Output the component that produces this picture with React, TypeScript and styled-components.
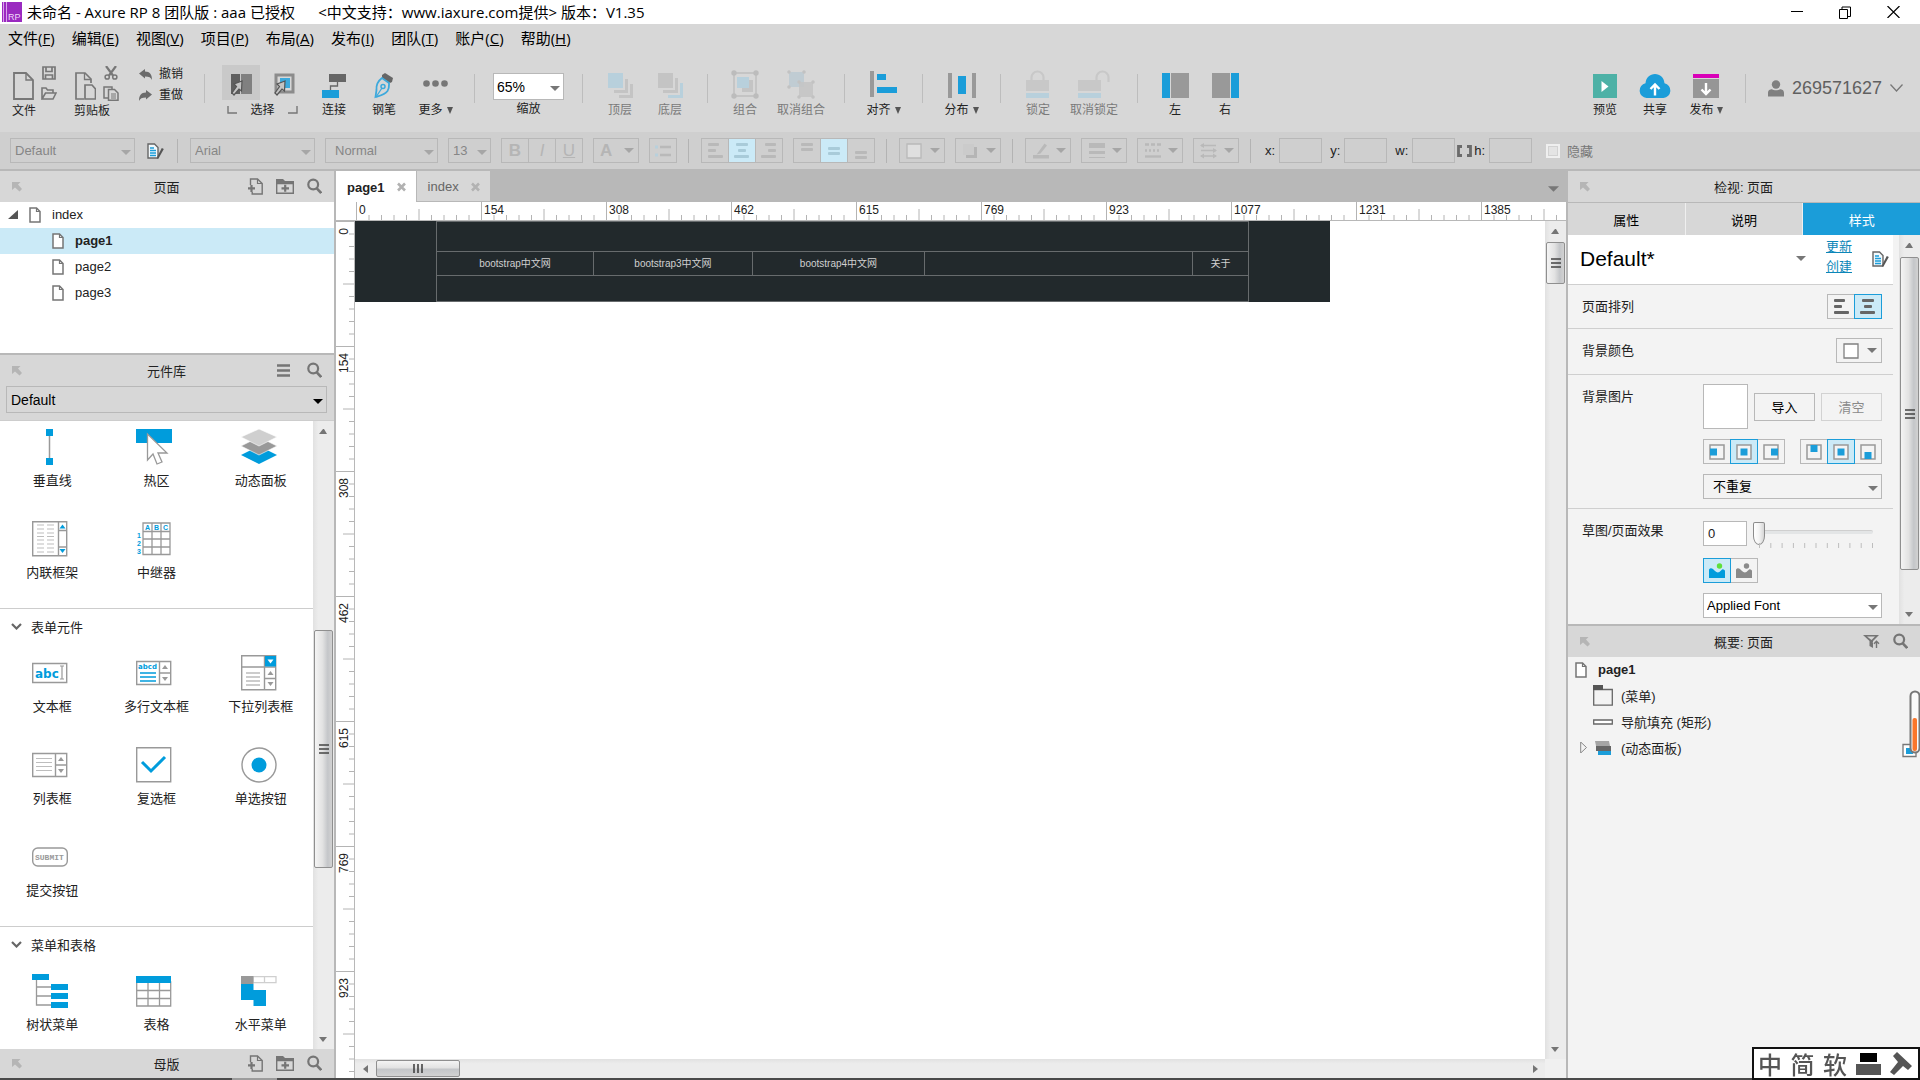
import React, { useId, useState } from 'react';
import styled, { createGlobalStyle, css } from 'styled-components';

/* ------------------------------------------------------------------ */
/* Theme                                                               */
/* ------------------------------------------------------------------ */

const UI_FONT = '"Liberation Sans", Arial, "Noto Sans CJK SC", sans-serif';
const SYSTEM_FONT = '"Open Sans", "Noto Sans CJK SC", sans-serif';

const c = {
  chrome: '#d7d7d7',
  format: '#cfcfcf',
  edge: '#b8b8b8',
  panel: '#f3f3f3',
  line: '#cfcfcf',
  blue: '#1b9dd9',
  iconBlue: '#009cdc',
  pale: '#cbeaf7',
  grey: '#999999',
  dark: '#757575',
  text: '#222222',
};

const GlobalStyle = createGlobalStyle`
  *, *::before, *::after { box-sizing: border-box; }
  html, body { margin: 0; padding: 0; }
  body { overflow: hidden; font-family: ${UI_FONT}; font-size: 13px; color: ${c.text}; }
  button, input, select { font: inherit; color: inherit; margin: 0; border-radius: 0; }
  button { background: none; border: 0; padding: 0; cursor: default; }
  ul { list-style: none; margin: 0; padding: 0; }
  h2, h3 { margin: 0; font-weight: normal; font-size: 13px; }
  svg { display: block; flex: none; }
`;

/* ------------------------------------------------------------------ */
/* Window frame                                                        */
/* ------------------------------------------------------------------ */

const Window = styled.div`
  display: flex;
  flex-direction: column;
  height: 100vh;
  background: ${c.chrome};
`;

const TitleBar = styled.header`
  display: flex;
  align-items: center;
  height: 24px;
  flex: none;
  padding: 0 14px 0 2px;
  background: #fff;
  color: #000;
  font-family: ${SYSTEM_FONT};
  font-size: 15px;
  line-height: 22px;
`;

const TitleText = styled.span`
  flex: 1;
  margin-left: 5px;
  white-space: pre;
`;

const WindowButtons = styled.div`
  display: flex;
  gap: 22px;
`;

const WindowButton = styled.button`
  display: grid;
  place-items: center;
  width: 26px;
  height: 22px;
`;

const MenuBar = styled.nav`
  display: flex;
  align-items: center;
  gap: 17px;
  height: 30px;
  flex: none;
  padding: 0 0 2px 8px;
  font-family: ${SYSTEM_FONT};
  font-size: 15px;
  color: #000;
`;

const MenuButton = styled.button`
  line-height: 22px;
  white-space: nowrap;
`;

const BottomEdge = styled.div`
  display: flex;
  height: 2px;
  flex: none;
  background: #4a4a4a;
`;

const BottomEdgeMark = styled.div`
  width: 45px;
  margin-left: 232px;
  background: #9c9c9c;
`;

/* ------------------------------------------------------------------ */
/* Main toolbar                                                        */
/* ------------------------------------------------------------------ */

const Toolbar = styled.div`
  display: flex;
  height: 78px;
  flex: none;
  padding: 11px 0 0 12px;
  font-size: 12px;
  white-space: nowrap;
`;

const ToolSep = styled.div`
  width: 1px;
  height: 29px;
  margin: 9px 12px 0;
  flex: none;
  background: #bdbdbd;
`;

const FileGroup = styled.div`
  width: 46px;
  margin-right: 16px;
`;

const FileIcons = styled.div`
  display: flex;
  gap: 7px;
  height: 37px;
`;

const FileMain = styled.button`
  padding-top: 4px;
`;

const FileSide = styled.div`
  display: flex;
  flex-direction: column;
  gap: 6px;
`;

const SideButton = styled.button`
  display: grid;
  place-items: center;
  width: 16px;
  height: 15px;
`;

const ToolLabel = styled.span`
  display: block;
  line-height: 18px;
  text-align: left;
`;

const UndoColumn = styled.div`
  display: flex;
  flex-direction: column;
  gap: 3px;
  width: 56px;
  padding-left: 3px;
`;

const UndoButton = styled.button`
  display: flex;
  align-items: center;
  gap: 7px;
  line-height: 18px;
`;

const Tool = styled.button<{ $w?: number; $off?: boolean }>`
  display: flex;
  flex-direction: column;
  align-items: center;
  width: ${(p) => p.$w ?? 50}px;
  height: 54px;
  flex: none;
  color: ${(p) => (p.$off ? '#7a7a7a' : c.text)};

  & > svg { margin-top: 5px; margin-bottom: 2px; }
  & > span { display: flex; align-items: center; gap: 4px; line-height: 18px; }
`;

const SelectGroup = styled.div`
  width: 92px;
  padding: 0 6px 0 5px;
`;

const SelectButtons = styled.div`
  display: flex;
  gap: 5px;
`;

const SelectButton = styled.button<{ $on?: boolean }>`
  display: grid;
  place-items: center;
  width: 38px;
  height: 35px;
  background: ${(p) => (p.$on ? '#c9c9c9' : 'transparent')};
`;

const SelectCaption = styled.div`
  display: flex;
  justify-content: space-between;
  align-items: center;
  padding: 0 5px;
  line-height: 18px;
  margin-top: 1px;
`;

const ZoomTool = styled.label`
  display: flex;
  flex-direction: column;
  align-items: center;
  width: 83px;
  padding-top: 8px;
  line-height: 18px;
`;

const PublishTools = styled.div`
  display: flex;
  margin-left: auto;
`;

const Account = styled.button`
  display: flex;
  align-items: center;
  gap: 8px;
  height: 46px;
  padding: 0 17px 0 10px;
  font-size: 18px;
  color: #606060;
`;

/* ------------------------------------------------------------------ */
/* Select box shared by every bar                                      */
/* ------------------------------------------------------------------ */

const SelectBox = styled.span<{ $w?: number }>`
  position: relative;
  display: block;
  flex: none;
  width: ${(p) => (p.$w ? `${p.$w}px` : '100%')};

  & > svg {
    position: absolute;
    right: 4px;
    top: 50%;
    margin-top: -1px;
    pointer-events: none;
  }
`;

const NativeSelect = styled.select<{ $bg?: string; $h?: number; $size?: number; $pad?: number; $edge?: string }>`
  display: block;
  appearance: none;
  width: 100%;
  height: ${(p) => p.$h ?? 25}px;
  padding: 0 16px 0 ${(p) => p.$pad ?? 4}px;
  border: 1px solid ${(p) => p.$edge ?? c.edge};
  background: ${(p) => p.$bg ?? 'transparent'};
  font-size: ${(p) => p.$size ?? 13}px;
  color: #000;
  opacity: 1;

  &:disabled { color: #868686; opacity: 1; }
`;

/* ------------------------------------------------------------------ */
/* Format bar                                                          */
/* ------------------------------------------------------------------ */

const FormatBar = styled.div`
  display: flex;
  align-items: center;
  gap: 10px;
  height: 37px;
  flex: none;
  padding: 0 10px;
  background: ${c.format};
`;

const FormatSep = styled.div`
  width: 1px;
  height: 24px;
  margin: 0 2px 0 1px;
  flex: none;
  background: #b3b3b3;
`;

const StyleButton = styled.button`
  width: 21px;
  padding-left: 2px;
`;

const Segments = styled.div`
  display: flex;
  flex: none;
`;

const segmentOn = css`
  background: ${c.pale};
`;

const Segment = styled.button<{ $on?: boolean; $strong?: boolean }>`
  display: grid;
  place-items: center;
  width: 28px;
  height: 25px;
  border: 1px solid ${c.edge};
  color: #b5b5b5;
  font-size: 17px;
  line-height: 22px;
  ${(p) => p.$on && segmentOn}
  ${(p) => p.$on && p.$strong && css`border-color: ${c.blue}; position: relative; z-index: 1;`}

  & + & { margin-left: -1px; }
`;

const DropButton = styled.button`
  display: flex;
  align-items: center;
  justify-content: space-between;
  width: 46px;
  height: 25px;
  flex: none;
  padding: 0 4px 0 6px;
  border: 1px solid ${c.edge};
  color: #b5b5b5;
  font-size: 17px;
`;

const CoordField = styled.label`
  display: flex;
  align-items: center;
  justify-content: flex-end;
  gap: 4px;
  flex: none;
`;

const Coords = styled.div`
  display: flex;
  align-items: center;
  gap: 8px;
  margin-left: 2px;
`;

const SizeCoords = styled(Coords)`
  gap: 2px;
  margin-left: 0;
`;

const CoordInput = styled.input`
  width: 43px;
  height: 25px;
  border: 1px solid ${c.edge};
  background: transparent;
`;

const HideField = styled.label`
  display: flex;
  align-items: center;
  gap: 7px;
  margin-left: 4px;
  color: #777;
`;

const HideBox = styled.input`
  appearance: none;
  width: 14px;
  height: 14px;
  border: 2px solid #efefef;
  background: #e4e4e4;
  box-shadow: inset 0 0 0 1px #d2d2d2;
`;

/* ------------------------------------------------------------------ */
/* Work area                                                           */
/* ------------------------------------------------------------------ */

const Work = styled.main`
  display: flex;
  flex: 1;
  min-height: 0;
  border-top: 2px solid ${c.edge};
`;

const LeftDock = styled.aside`
  display: flex;
  flex-direction: column;
  width: 336px;
  flex: none;
  border-right: 2px solid ${c.edge};
`;

const RightDock = styled.aside`
  position: relative;
  display: flex;
  flex-direction: column;
  width: 354px;
  flex: none;
  border-left: 2px solid ${c.edge};
  background: ${c.panel};
`;

const PanelHead = styled.header<{ $rule?: boolean; $h?: number }>`
  display: grid;
  grid-template-columns: 1fr auto 1fr;
  align-items: center;
  height: ${(p) => p.$h ?? 31}px;
  flex: none;
  padding: 0 12px 1px 11px;
  background: ${c.chrome};
  border-bottom: ${(p) => (p.$rule ? `1px solid ${c.edge}` : '0')};
`;

const HeadIcons = styled.div`
  display: flex;
  justify-content: flex-end;
  align-items: center;
  gap: 13px;
`;

const PageTree = styled.ul`
  height: 151px;
  flex: none;
  background: #fff;
`;

const TreeRow = styled.li<{ $indent: number; $on?: boolean; $gap?: number }>`
  display: flex;
  align-items: center;
  gap: ${(p) => p.$gap ?? 11}px;
  height: 26px;
  padding: 0 0 1px ${(p) => p.$indent}px;
  font-weight: ${(p) => (p.$on ? 'bold' : 'normal')};
  background: ${(p) => (p.$on ? c.pale : 'transparent')};
`;

const OutlineRow = styled(TreeRow)`
  background: transparent;
`;

const LibraryTop = styled.div`
  flex: none;
  border-top: 2px solid ${c.edge};
  background: ${c.chrome};
`;

const LibraryPick = styled.div`
  padding: 0 7px 7px 6px;
`;

const Library = styled.div`
  display: flex;
  flex: 1;
  min-height: 0;
  background: #fff;
  border-top: 1px solid #cdcdcd;
`;

const LibraryScroll = styled.div`
  flex: 1;
  min-width: 0;
  overflow: hidden;
  padding-top: 3px;
`;

const LibraryHeading = styled.h3`
  display: flex;
  align-items: center;
  gap: 9px;
  height: 42px;
  padding: 0 0 6px 11px;
  border-top: 1px solid #cdcdcd;
`;

const WidgetGrid = styled.ul`
  display: grid;
  grid-template-columns: repeat(3, 1fr);
  grid-auto-rows: 92px;
`;

const Widget = styled.li`
  display: flex;
  flex-direction: column;
  align-items: center;
  padding-top: 5px;
  line-height: 20px;
  white-space: nowrap;

  & > svg { margin: 0 4px 6px 0; }
`;

/* ------------------------------------------------------------------ */
/* Scroll bars                                                         */
/* ------------------------------------------------------------------ */

const ScrollTrack = styled.div<{ $h?: boolean }>`
  display: flex;
  flex-direction: ${(p) => (p.$h ? 'row' : 'column')};
  ${(p) => (p.$h ? 'height: 19px; flex: 1;' : 'width: 21px; flex: none;')}
  background: linear-gradient(${(p) => (p.$h ? '180deg' : '90deg')}, #e1e1e1, #ececec 25%, #ececec);
`;

const ScrollArrow = styled.button`
  display: grid;
  place-items: center;
  width: 20px;
  height: 20px;
  flex: none;
`;

const ScrollArrowH = styled(ScrollArrow)`
  height: 19px;
`;

const ScrollSpace = styled.div<{ $n: number }>`
  flex: ${(p) => p.$n} 1 0;
`;

const ScrollThumb = styled.div<{ $h?: boolean; $n: number }>`
  display: grid;
  place-items: center;
  flex: ${(p) => p.$n} 1 0;
  margin: 1px;
  border: 1px solid #8f8f8f;
  border-radius: 2px;
  background: ${(p) =>
    p.$h
      ? 'linear-gradient(180deg, #f4f4f4, #e2e2e2 45%, #c4c6c9 55%, #d2d2d2)'
      : 'linear-gradient(90deg, #f4f4f4, #e2e2e2 45%, #c4c6c9 75%, #d2d2d2)'};
`;

/* ------------------------------------------------------------------ */
/* Centre                                                              */
/* ------------------------------------------------------------------ */

const Centre = styled.section`
  display: flex;
  flex-direction: column;
  flex: 1;
  min-width: 0;
  background: #fff;
`;

const TabStrip = styled.div`
  display: flex;
  height: 31px;
  flex: none;
  background: ${c.edge};
`;

const Tab = styled.div<{ $on?: boolean }>`
  display: flex;
  align-items: center;
  gap: 12px;
  padding: 1px 10px 0 11px;
  border-right: 1px solid ${c.edge};
  margin-bottom: ${(p) => (p.$on ? 0 : 1)}px;
  background: ${(p) => (p.$on ? '#fff' : c.chrome)};
  color: ${(p) => (p.$on ? c.text : '#666')};
  font-weight: ${(p) => (p.$on ? 'bold' : 'normal')};
`;

const TabMenu = styled.button`
  margin-left: auto;
  padding: 5px 7px 0 0;
`;

const RulerTop = styled.div`
  display: flex;
  height: 19px;
  flex: none;
  overflow: hidden;
  padding-left: 20px;
  border-bottom: 1px solid ${c.edge};
  font-size: 12px;
`;

const TopMark = styled.div`
  display: grid;
  width: 125px;
  flex: none;
  line-height: 16px;

  & > * { grid-area: 1 / 1; }
  & > span { padding-left: 3px; }
`;

const CentreBody = styled.div`
  display: flex;
  flex: 1;
  min-height: 0;
`;

const RulerSide = styled.div`
  display: flex;
  flex-direction: column;
  width: 19px;
  flex: none;
  overflow: hidden;
  border-right: 1px solid ${c.edge};
  font-size: 12px;
`;

const SideMark = styled.div`
  display: grid;
  height: 125px;
  flex: none;
  line-height: 16px;

  & > * { grid-area: 1 / 1; }
  & > span {
    justify-self: start;
    align-self: start;
    margin-top: 7px;
    writing-mode: vertical-rl;
    transform: rotate(180deg);
  }
`;

const CanvasColumn = styled.div`
  display: flex;
  flex-direction: column;
  flex: 1;
  min-width: 0;
`;

const CanvasRow = styled.div`
  display: flex;
  flex: 1;
  min-height: 0;
`;

const Canvas = styled.div`
  flex: 1;
  min-width: 0;
  overflow: hidden;
  background: #fff;
`;

const Banner = styled.div`
  width: 975px;
  height: 81px;
  padding: 0 81px;
  background: #22292c;
`;

const BannerFrame = styled.div`
  display: grid;
  grid-template-rows: 29px 25px 1fr;
  height: 100%;
  border: 1px solid #676b6d;
`;

const BannerMenu = styled.ul`
  grid-row: 2;
  display: grid;
  grid-template-columns: 156px 159px 172px 1fr 56px;
  border-top: 1px solid #676b6d;
  border-bottom: 1px solid #676b6d;
  font-size: 10px;
  line-height: 23px;
  text-align: center;
  color: #d0d0d0;
`;

const BannerItem = styled.li`
  & + & { border-left: 1px solid #676b6d; }
`;

const ScrollRow = styled.div`
  display: flex;
  flex: none;
`;

const ScrollCorner = styled.div`
  width: 21px;
  background: #f0f0f0;
`;

/* ------------------------------------------------------------------ */
/* Inspector                                                           */
/* ------------------------------------------------------------------ */

const InspectorTabs = styled.div`
  display: grid;
  grid-template-columns: repeat(3, 1fr);
  gap: 1px;
  height: 32px;
  flex: none;
  background: #efefef;
`;

const InspectorTab = styled.button<{ $on?: boolean }>`
  background: ${(p) => (p.$on ? c.blue : c.chrome)};
  color: ${(p) => (p.$on ? '#fff' : '#000')};
`;

const Inspector = styled.div`
  display: flex;
  height: 391px;
  flex: none;
  border-bottom: 2px solid ${c.edge};
`;

const InspectorBody = styled.div`
  flex: 1;
  min-width: 0;
  margin-right: 6px;
`;

const StyleRow = styled.div`
  display: flex;
  align-items: center;
  height: 50px;
  padding: 0 4px 2px 12px;
  border-bottom: 1px solid ${c.line};
  background: #fff;
`;

const StyleName = styled.button`
  display: flex;
  flex: 1;
  align-items: center;
  justify-content: space-between;
  font-size: 21px;
  color: #000;
`;

const StyleLinks = styled.div`
  display: flex;
  flex: none;
  flex-direction: column;
  margin: 0 20px 4px;
  line-height: 20px;
  white-space: nowrap;

  & > a { color: #0c86b8; }
`;

const PropRow = styled.div<{ $h: number }>`
  display: grid;
  grid-template-columns: 121px 1fr;
  min-height: ${(p) => p.$h}px;
  padding: 9px 11px 0 14px;
  border-bottom: 1px solid ${c.line};

  &:last-child { border-bottom: 0; }
`;

const PropLabel = styled.span`
  line-height: 26px;
`;

const PropControls = styled.div<{ $end?: boolean }>`
  display: flex;
  flex-direction: column;
  align-items: ${(p) => (p.$end ? 'flex-end' : 'stretch')};
  gap: 10px;
`;

const ControlLine = styled.div<{ $between?: boolean }>`
  display: flex;
  align-items: center;
  justify-content: ${(p) => (p.$between ? 'space-between' : 'flex-start')};
  gap: 6px;
`;

const Preview = styled.div`
  width: 45px;
  height: 45px;
  border: 1px solid ${c.edge};
  background: #fff;
`;

const PushButton = styled.button`
  width: 61px;
  height: 28px;
  border: 1px solid ${c.edge};
  color: #000;

  &:disabled { border-color: #d2d2d2; color: #8a8a8a; }
`;

const EffectInput = styled.input`
  width: 44px;
  height: 25px;
  padding: 0 4px;
  border: 1px solid ${c.edge};
  background: #fff;
`;

const SliderBox = styled.div`
  width: 126px;
  height: 30px;
  padding-top: 2px;
`;

const Slider = styled.input`
  display: block;
  appearance: none;
  width: 120px;
  height: 23px;
  background: transparent;

  &::-webkit-slider-runnable-track {
    height: 4px;
    border-radius: 2px;
    background: #e3e5e6;
    border-top: 1px solid #cfcfcf;
  }
  &::-webkit-slider-thumb {
    appearance: none;
    width: 12px;
    height: 23px;
    margin-top: -9px;
    border: 1px solid #8c8c8c;
    border-radius: 2px 2px 6px 6px / 2px 2px 9px 9px;
    background: linear-gradient(90deg, #fff, #f4f4f4 50%, #d6d6d6);
  }
`;

const OutlineList = styled.ul`
  flex: 1;
`;

const PanelMark = styled.div`
  position: absolute;
  right: 0;
  top: 519px;
`;

const ImeBar = styled.div`
  position: fixed;
  right: 0;
  bottom: 0;
  display: flex;
  align-items: center;
  justify-content: space-between;
  width: 168px;
  height: 33px;
  padding: 0 5px 0 4px;
  border: 2px solid #111;
  background: #fff;
  color: #555;
  font-family: "Noto Sans CJK SC", sans-serif;
  font-size: 24px;
  font-weight: 500;
  line-height: 28px;
`;

/* ------------------------------------------------------------------ */
/* Icons                                                               */
/* ------------------------------------------------------------------ */

type IconProps = { w: number; h: number; children: React.ReactNode; vb?: string };

const Icon = ({ w, h, children, vb }: IconProps) => (
  <svg width={w} height={h} viewBox={vb ?? `0 0 ${w} ${h}`} fill="none" aria-hidden="true">
    {children}
  </svg>
);

const Caret = ({ color = '#777', w = 10, h = 5 }: { color?: string; w?: number; h?: number }) => (
  <Icon w={w} h={h} vb="0 0 10 5">
    <path d="M0 0h10L5 5z" fill={color} />
  </Icon>
);

const SmallCaret = () => (
  <Icon w={6} h={7}><path d="M0 0h6L3 7z" fill="#555" /></Icon>
);

const DockArrow = () => (
  <Icon w={11} h={11}>
    <path d="M1 1h8.500L7 3.500 11 8 8.500 10.500 4 6.500 1 9z" fill="#b5b5b5" />
    <path d="M4 3.500l5 5.500" stroke="#b5b5b5" />
  </Icon>
);

const PageIcon = () => (
  <Icon w={12} h={16}>
    <path d="M1 1h6.500L11 4.500V15H1z" stroke={c.dark} strokeWidth="1.500" fill="#fff" />
    <path d="M7.500 1v3.500H11" stroke={c.dark} strokeWidth="1.200" />
  </Icon>
);

const SearchIcon = () => (
  <Icon w={15} h={16}>
    <circle cx="6.200" cy="6.500" r="4.900" stroke={c.dark} strokeWidth="2.200" />
    <path d="M9.800 10.300l4.400 4.700" stroke={c.dark} strokeWidth="2.600" />
  </Icon>
);

const AddPageIcon = () => (
  <Icon w={15} h={17}>
    <path d="M2.500 7V1h7l4.700 4.500V16h-10v-2" stroke={c.dark} strokeWidth="1.400" />
    <path d="M9.500 1v4.500h4.500" stroke={c.dark} strokeWidth="1.200" />
    <path d="M0 10.300h7M3.500 7v7" stroke={c.dark} strokeWidth="2.200" />
  </Icon>
);

const AddFolderIcon = () => (
  <Icon w={18} h={15}>
    <path d="M.7 4.500h16.600v9.800H.7z" stroke={c.dark} strokeWidth="1.400" />
    <path d="M0 0h7l2 2h9v2.500H0z" fill={c.dark} />
    <path d="M5.500 9.300h7.500M9.200 5.800v7" stroke={c.dark} strokeWidth="2.200" />
  </Icon>
);

const BurgerIcon = () => (
  <Icon w={17} h={13}>
    <path d="M0 1.500h13M0 6.500h13M0 11.500h13" stroke={c.dark} strokeWidth="2.400" />
  </Icon>
);

const FilterIcon = () => (
  <Icon w={17} h={13}>
    <path d="M0 0h16L10 6v7L6.500 11V6z" fill={c.dark} />
    <path d="M4 1.500h8L8.500 5z" fill="#d7d7d7" />
    <path d="M13.500 13V6M10.800 8.800l2.700-2.800 2.700 2.800" stroke="#d7d7d7" strokeWidth="3.500" />
    <path d="M13.500 13V6M11 8.700l2.500-2.500L16 8.700" stroke={c.dark} strokeWidth="1.400" />
  </Icon>
);

const CloseIcon = () => (
  <Icon w={9} h={10}>
    <path d="M1 1.500l7 7M8 1.500l-7 7" stroke="#b2b2b2" strokeWidth="2.600" />
  </Icon>
);

const StyleIcon = () => (
  <Icon w={17} h={16}>
    <path d="M1 1h6.500L11 4.500V15H1z" stroke="#666" strokeWidth="1.400" fill="#f2f9fc" />
    <path d="M3 5h4M3 7.500h6M3 10h6M3 12.500h6" stroke={c.blue} strokeWidth="1.600" />
    <path d="M14.800 5l-4.300 8.300-.6 2.700 2.300-1.800 4.600-8.200z" fill="#555" />
  </Icon>
);

type LinesProps = { rows: [number, number, number][]; color: string };

/* Each row is [x, y, width]. */
const Lines = ({ rows, color }: LinesProps) => (
  <Icon w={16} h={16}>
    {rows.map(([x, y, w]) => (
      <rect key={`${x}-${y}`} x={x} y={y} width={w} height={3} rx={1} fill={color} />
    ))}
  </Icon>
);

const alignLeft: [number, number, number][] = [[1, 0, 11], [1, 6, 8], [1, 12, 15]];
const alignMid: [number, number, number][] = [[2, 0, 12], [4, 6, 8], [0, 12, 15]];
const alignRight: [number, number, number][] = [[4, 0, 11], [7, 6, 8], [0, 12, 15]];

const InsetIcon = ({ x, y }: { x: number; y: number }) => (
  <Icon w={16} h={16}>
    <rect x="1" y="1" width="14" height="14" stroke={c.grey} strokeWidth="1.500" fill="#f4f4f4" />
    <rect x={x} y={y} width="7" height="7" fill={c.blue} />
  </Icon>
);

const PictureIcon = ({ land, sun }: { land: string; sun: string }) => (
  <Icon w={16} h={15}>
    <path d="M0 6.500C2 4 4 6 6 8s4 2 6-.5 3-1 4 0V15H0z" fill={land} />
    <circle cx="10.500" cy="3" r="2.700" fill={sun} />
  </Icon>
);

/* ------------------------------------------------------------------ */
/* Scroll bar component                                                */
/* ------------------------------------------------------------------ */

type ScrollProps = { before: number; size: number; after: number };

const ScrollV = ({ before, size, after }: ScrollProps) => (
  <ScrollTrack>
    <ScrollArrow aria-label="向上">
      <Icon w={8} h={5}><path d="M0 5h8L5 0H4z" fill={c.dark} /></Icon>
    </ScrollArrow>
    <ScrollSpace $n={before} />
    <ScrollThumb $n={size}>
      <Icon w={10} h={10}><path d="M0 1h10M0 5h10M0 9h10" stroke="#444" strokeWidth="1.600" /></Icon>
    </ScrollThumb>
    <ScrollSpace $n={after} />
    <ScrollArrow aria-label="向下">
      <Icon w={8} h={5}><path d="M0 0h8L4 5z" fill={c.dark} /></Icon>
    </ScrollArrow>
  </ScrollTrack>
);

const ScrollH = ({ before, size, after }: ScrollProps) => (
  <ScrollTrack $h>
    <ScrollArrowH aria-label="向左">
      <Icon w={5} h={8}><path d="M5 0v8L0 4z" fill={c.dark} /></Icon>
    </ScrollArrowH>
    <ScrollSpace $n={before} />
    <ScrollThumb $h $n={size}>
      <Icon w={10} h={9}><path d="M1 0v9M5 0v9M9 0v9" stroke="#444" strokeWidth="1.600" /></Icon>
    </ScrollThumb>
    <ScrollSpace $n={after} />
    <ScrollArrowH aria-label="向右">
      <Icon w={5} h={8}><path d="M0 0v8l5-4z" fill={c.dark} /></Icon>
    </ScrollArrowH>
  </ScrollTrack>
);

/* ------------------------------------------------------------------ */
/* Title and menu                                                      */
/* ------------------------------------------------------------------ */

const menus: [string, string][] = [
  ['文件', 'F'], ['编辑', 'E'], ['视图', 'V'], ['项目', 'P'], ['布局', 'A'],
  ['发布', 'I'], ['团队', 'T'], ['账户', 'C'], ['帮助', 'H'],
];

const Title = () => (
  <TitleBar>
    <Icon w={20} h={20}>
      <rect width="20" height="20" fill="#9a2ac0" />
      <path d="M1.500 0v20M4.500 0v20" stroke="#d9a5ea" strokeWidth="1" />
      <text x="6" y="18" fontFamily="Liberation Sans" fontSize="9" fill="#f0d8f8">RP</text>
    </Icon>
    <TitleText>{'未命名 - Axure RP 8 团队版 : aaa 已授权      <中文支持：www.iaxure.com提供> 版本：V1.35'}</TitleText>
    <WindowButtons>
      <WindowButton aria-label="最小化"><Icon w={12} h={12}><path d="M0 5.500h12" stroke="#000" /></Icon></WindowButton>
      <WindowButton aria-label="还原">
        <Icon w={12} h={13}><path d="M.5 3.500h8v9h-8zM3 3V1h8.500v9.500H9" stroke="#000" /></Icon>
      </WindowButton>
      <WindowButton aria-label="关闭"><Icon w={13} h={12}><path d="M.5 0l12 12M12.500 0l-12 12" stroke="#000" strokeWidth="1.200" /></Icon></WindowButton>
    </WindowButtons>
  </TitleBar>
);

/* ------------------------------------------------------------------ */
/* Toolbar pieces                                                      */
/* ------------------------------------------------------------------ */

const F = '#b8d0dc';
const G = '#c4c4c4';

const LargeCursor = () => (
  <path d="M11 12l-8 3 2.500 2.500L1 24l2 2 5-6 2.500 2z" fill="#c4c4c4" stroke="#555" strokeWidth="1.200" />
);

const ToolbarView = () => {
  const [zoom, setZoom] = useState('65%');
  return (
    <Toolbar>
      <FileGroup>
        <FileIcons>
          <FileMain aria-label="新建">
            <Icon w={22} h={30}>
              <path d="M2 2h12l7 7v19H2z" stroke="#777" strokeWidth="1.800" />
              <path d="M14 2v7h7" stroke="#777" strokeWidth="1.400" />
            </Icon>
          </FileMain>
          <FileSide>
            <SideButton aria-label="保存">
              <Icon w={14} h={14}>
                <path d="M1 1h12v12H1zM4 1v4.500h6V1M3.500 13V9h7v4" stroke="#777" strokeWidth="1.700" />
              </Icon>
            </SideButton>
            <SideButton aria-label="打开">
              <Icon w={16} h={13}>
                <path d="M1 12V1h4l1.500 2H12v3M1 12l3.500-6H15l-3 6z" stroke="#777" strokeWidth="1.600" />
              </Icon>
            </SideButton>
          </FileSide>
        </FileIcons>
        <ToolLabel>文件</ToolLabel>
      </FileGroup>
      <FileGroup>
        <FileIcons>
          <FileMain aria-label="粘贴">
            <Icon w={22} h={30}>
              <path d="M10 28H2V2h9l6 6v4" stroke="#777" strokeWidth="1.700" />
              <path d="M10.500 2v6.500H17" stroke="#777" strokeWidth="1.300" />
              <path d="M11 14h7l3.500 4v10H11z" stroke="#777" strokeWidth="1.700" />
            </Icon>
          </FileMain>
          <FileSide>
            <SideButton aria-label="剪切">
              <Icon w={14} h={14}>
                <path d="M2 0l7 9.500M12 0L5 9.500" stroke="#777" strokeWidth="2.200" />
                <circle cx="3.200" cy="11" r="2.100" stroke="#777" strokeWidth="1.500" />
                <circle cx="10.800" cy="11" r="2.100" stroke="#777" strokeWidth="1.500" />
              </Icon>
            </SideButton>
            <SideButton aria-label="复制">
              <Icon w={16} h={15}>
                <path d="M5 12H1V1h8v2" stroke="#777" strokeWidth="1.500" />
                <path d="M5.500 3.500h6L15 7v7.300H5.500z" stroke="#777" strokeWidth="1.500" />
                <path d="M8 8h5M8 10h5M8 12h5" stroke="#777" />
              </Icon>
            </SideButton>
          </FileSide>
        </FileIcons>
        <ToolLabel>剪贴板</ToolLabel>
      </FileGroup>
      <UndoColumn>
        <UndoButton>
          <Icon w={13} h={11}><path d="M0 4.500L6 0v2.500c5 0 7 3 7 8.500-1-2.500-3-3.500-7-3.500V9.500z" fill="#6b6b6b" /></Icon>
          撤销
        </UndoButton>
        <UndoButton>
          <Icon w={13} h={11}><path d="M13 4.500L7 0v2.500c-5 0-7 3-7 8.500 1-2.500 3-3.500 7-3.500V9.500z" fill="#6b6b6b" /></Icon>
          重做
        </UndoButton>
      </UndoColumn>
      <ToolSep />
      <SelectGroup>
        <SelectButtons>
          <SelectButton $on aria-label="相交选择">
            <Icon w={21} h={27}>
              <path d="M0 5h9v20H0z" fill="#5f5f5f" />
              <path d="M10 5h11v20H10z" fill="#808080" />
              <LargeCursor />
            </Icon>
          </SelectButton>
          <SelectButton aria-label="包含选择">
            <Icon w={21} h={27}>
              <path d="M2 6h17v17H2z" stroke="#8c8c8c" strokeWidth="3" fill="#d7d7d7" />
              <path d="M6 9h10v10H6z" fill="#3da9dc" />
              <LargeCursor />
            </Icon>
          </SelectButton>
        </SelectButtons>
        <SelectCaption>
          <Icon w={10} h={8}><path d="M1 0v7h9" stroke="#777" strokeWidth="1.400" /></Icon>
          选择
          <Icon w={10} h={8}><path d="M9 0v7H0" stroke="#777" strokeWidth="1.400" /></Icon>
        </SelectCaption>
      </SelectGroup>
      <Tool>
        <Icon w={24} h={29}>
          <path d="M7 4h17v8H7z" fill="#666" />
          <path d="M15.500 12v4h-7v4" stroke="#666" strokeWidth="1.300" />
          <path d="M0 20h17v8H0z" fill={c.blue} />
        </Icon>
        <span>连接</span>
      </Tool>
      <Tool>
        <Icon w={20} h={29}>
          <path d="M8 5l3-2 8 5-1 4-2 1-8-5z" fill="#666" />
          <path d="M8 8c-4 3-6 7-5.500 12l-1 7c5-1.500 9-2 12-6 2-3 1.500-5 1.500-8z" stroke="#3da9dc" strokeWidth="1.800" />
          <circle cx="9" cy="16.500" r="2" stroke="#3da9dc" strokeWidth="1.500" />
          <path d="M2 27l6-9" stroke="#3da9dc" strokeWidth="1.300" />
        </Icon>
        <span>钢笔</span>
      </Tool>
      <Tool $w={53}>
        <Icon w={26} h={29}>
          <circle cx="3.500" cy="13.500" r="3.300" fill="#777" />
          <circle cx="12.500" cy="13.500" r="3.300" fill="#777" />
          <circle cx="21.500" cy="13.500" r="3.300" fill="#777" />
        </Icon>
        <span>更多<SmallCaret /></span>
      </Tool>
      <ToolSep />
      <ZoomTool>
        <SelectBox $w={71}>
          <NativeSelect $bg="#fff" $h={27} $size={14} $pad={3} value={zoom} onChange={(e) => setZoom(e.target.value)}>
            <option>65%</option>
            <option>100%</option>
          </NativeSelect>
          <Caret />
        </SelectBox>
        缩放
      </ZoomTool>
      <ToolSep />
      <Tool $off>
        <Icon w={25} h={29}>
          <path d="M0 3h15v15H0z" fill={F} />
          <path d="M17 9h3v14H6v-3h11z" fill={G} />
          <path d="M22 14h3v14H11v-3h11z" fill={G} />
        </Icon>
        <span>顶层</span>
      </Tool>
      <Tool $off>
        <Icon w={25} h={29}>
          <path d="M0 3h15v15H0z" fill={G} />
          <path d="M17 8h3v15H5v-3h12z" fill={G} />
          <path d="M22 13h3v15H10v-3h12z" fill={F} />
        </Icon>
        <span>底层</span>
      </Tool>
      <ToolSep />
      <Tool $off>
        <Icon w={28} h={29}>
          <path d="M3 3h22v23H3z" stroke={G} strokeWidth="1.800" />
          <path d="M11 10h11v12H11z" fill={G} />
          <path d="M6 7h12v11H6z" fill={F} />
          {[[3, 3], [25, 3], [3, 26], [25, 26]].map(([x, y]) => <circle key={`${x}${y}`} cx={x} cy={y} r="2.700" fill="#bcbcbc" />)}
        </Icon>
        <span>组合</span>
      </Tool>
      <Tool $off $w={62}>
        <Icon w={28} h={29}>
          <path d="M2 2h15v15H2z" fill="#c0ccd3" />
          <path d="M12 12h14v15H12z" fill={G} opacity=".85" />
          {[[2, 2], [17, 2], [2, 17], [26, 12], [12, 27], [26, 27], [12, 12]].map(([x, y]) => <circle key={`${x}-${y}`} cx={x} cy={y} r="1.800" fill="#c2c2c2" />)}
        </Icon>
        <span>取消组合</span>
      </Tool>
      <ToolSep />
      <Tool $w={53}>
        <Icon w={28} h={29}>
          <path d="M0 1h4v26H0z" fill={c.grey} />
          <path d="M7 4h9v6H7zM7 17h20v6H7z" fill={c.blue} />
        </Icon>
        <span>对齐<SmallCaret /></span>
      </Tool>
      <ToolSep />
      <Tool $w={53}>
        <Icon w={28} h={29}>
          <path d="M0 3h4v25H0zM24 3h4v25h-4z" fill={c.grey} />
          <path d="M10 6h8v18h-8z" fill={c.blue} />
        </Icon>
        <span>分布<SmallCaret /></span>
      </Tool>
      <ToolSep />
      <Tool $off>
        <Icon w={24} h={29}>
          <path d="M0 10h23v11H0z" fill="#c8c8c8" />
          <path d="M5.500 10V7.500a6 6 0 0 1 12 0V10" stroke="#c8c8c8" strokeWidth="2.200" />
          <path d="M0 23h23v5H0z" fill={F} />
        </Icon>
        <span>锁定</span>
      </Tool>
      <Tool $off $w={62}>
        <Icon w={32} h={29}>
          <path d="M0 10h23v11H0z" fill="#c8c8c8" />
          <path d="M18.500 10V7.500a6 6 0 0 1 12 0V12" stroke="#c8c8c8" strokeWidth="2.200" />
          <path d="M0 23h23v5H0z" fill={F} />
        </Icon>
        <span>取消锁定</span>
      </Tool>
      <ToolSep />
      <Tool>
        <Icon w={27} h={29}>
          <path d="M0 3h8v25H0z" fill={c.blue} />
          <path d="M9 3h18v25H9z" fill={c.grey} />
        </Icon>
        <span>左</span>
      </Tool>
      <Tool>
        <Icon w={27} h={29}>
          <path d="M0 3h18v25H0z" fill={c.grey} />
          <path d="M19 3h8v25h-8z" fill={c.blue} />
        </Icon>
        <span>右</span>
      </Tool>
      <PublishTools>
        <Tool>
          <Icon w={24} h={29}>
            <path d="M0 4h24v24H0z" fill="#4db1a6" />
            <path d="M8.500 11v11l7-5.500z" fill="#fff" />
          </Icon>
          <span>预览</span>
        </Tool>
        <Tool>
          <Icon w={32} h={29}>
            <path d="M7.500 28a7.500 7.500 0 0 1-1-14.800C7 7.500 11 4 16 4s9 3.500 9.500 9.200A7.500 7.500 0 0 1 24.500 28z" fill={c.blue} />
            <path d="M16 25.500V15M11.500 19l4.500-4.500 4.500 4.500" stroke="#fff" strokeWidth="2.400" />
          </Icon>
          <span>共享</span>
        </Tool>
        <Tool $w={53}>
          <Icon w={26} h={29}>
            <path d="M0 4h26v4H0z" fill="#d900b8" />
            <path d="M0 9h26v19H0z" fill="#969696" />
            <path d="M13 13v11M8.500 19.500L13 24l4.500-4.500" stroke="#fff" strokeWidth="2.400" />
          </Icon>
          <span>发布<SmallCaret /></span>
        </Tool>
        <ToolSep />
        <Account>
          <Icon w={16} h={17}>
            <circle cx="8" cy="4.500" r="4.200" fill="#808080" />
            <path d="M0 16.500v-3.500c0-3 2-3.800 4-3.800 2 1.300 6 1.300 8 0 2 0 4 .8 4 3.800v3.500z" fill="#808080" />
          </Icon>
          269571627
          <Icon w={13} h={8}><path d="M.5.5l6 6.500 6-6.500" stroke="#777" strokeWidth="1.300" /></Icon>
        </Account>
      </PublishTools>
    </Toolbar>
  );
};

/* ------------------------------------------------------------------ */
/* Format bar                                                          */
/* ------------------------------------------------------------------ */

const FormatSelect = ({ value, w, pad, label }: { value: string; w: number; pad?: number; label: string }) => (
  <SelectBox $w={w}>
    <NativeSelect disabled aria-label={label} $pad={pad}><option>{value}</option></NativeSelect>
    <Caret color="#a6a6a6" />
  </SelectBox>
);

const FormatBarView = () => {
  const dim = '#b9b9b9';
  return (
    <FormatBar>
      <FormatSelect value="Default" w={125} label="样式" />
      <StyleButton aria-label="样式管理"><StyleIcon /></StyleButton>
      <FormatSep />
      <FormatSelect value="Arial" w={125} label="字体" />
      <FormatSelect value="Normal" w={113} pad={9} label="字形" />
      <FormatSelect value="13" w={43} label="字号" />
      <Segments>
        <Segment><b>B</b></Segment>
        <Segment><i>I</i></Segment>
        <Segment><u>U</u></Segment>
      </Segments>
      <DropButton><b>A</b><Caret color="#a6a6a6" /></DropButton>
      <Segment aria-label="项目符号">
        <Icon w={16} h={14}>
          <path d="M0 3h3M0 11h3" stroke={F} strokeWidth="3" />
          <path d="M5 3h11M5 11h11" stroke={dim} strokeWidth="2.400" />
        </Icon>
      </Segment>
      <FormatSep />
      <Segments>
        <Segment aria-label="左对齐"><Lines rows={alignLeft} color={dim} /></Segment>
        <Segment $on aria-label="居中"><Lines rows={alignMid} color="#a9cbd9" /></Segment>
        <Segment aria-label="右对齐"><Lines rows={alignRight} color={dim} /></Segment>
      </Segments>
      <Segments>
        <Segment aria-label="顶部对齐"><Lines rows={[[2, 0, 12], [2, 5, 12]]} color={dim} /></Segment>
        <Segment $on aria-label="垂直居中"><Lines rows={[[2, 4, 12], [2, 9, 12]]} color="#a9cbd9" /></Segment>
        <Segment aria-label="底部对齐"><Lines rows={[[2, 8, 12], [2, 13, 12]]} color={dim} /></Segment>
      </Segments>
      <FormatSep />
      <DropButton aria-label="填充">
        <Icon w={16} h={16}><path d="M1 1h14v14H1z" stroke={dim} strokeWidth="1.300" fill="#dfdfdf" /></Icon>
        <Caret color="#a6a6a6" />
      </DropButton>
      <DropButton aria-label="阴影">
        <Icon w={16} h={16}>
          <path d="M4 4h11v11H4z" fill="#b5b5b5" />
          <path d="M1 1h11v11H1z" fill="#cbcbcb" />
        </Icon>
        <Caret color="#a6a6a6" />
      </DropButton>
      <FormatSep />
      <DropButton aria-label="线段颜色">
        <Icon w={18} h={16}>
          <path d="M6 9.500l6.500-9 2.500 2-6.500 8-4 1z" fill={dim} />
          <path d="M1 12h16v3.500H1z" fill={dim} />
        </Icon>
        <Caret color="#a6a6a6" />
      </DropButton>
      <DropButton aria-label="线宽">
        <Icon w={17} h={16}><path d="M1 0h16v5H1zM1 8h16v3H1zM1 14h16v1H1z" fill={dim} /></Icon>
        <Caret color="#a6a6a6" />
      </DropButton>
      <DropButton aria-label="线段类型">
        <Icon w={17} h={16}>
          <path d="M1 1.500h16" stroke={dim} strokeWidth="2.400" strokeDasharray="4 2" />
          <path d="M1 7.500h16" stroke={dim} strokeWidth="2.400" strokeDasharray="2 2" />
          <path d="M1 13.500h16" stroke={dim} strokeWidth="2.400" />
        </Icon>
        <Caret color="#a6a6a6" />
      </DropButton>
      <DropButton aria-label="箭头样式">
        <Icon w={17} h={16}>
          <path d="M1 2.500h15M1 7.500h15M1 13h15" stroke={dim} strokeWidth="1.400" />
          <path d="M4 0v5L0 2.500zM13 5v5l4-2.500zM4 10.500v5L0 13zM13 10.500v5l4-2.500z" fill={dim} />
        </Icon>
        <Caret color="#a6a6a6" />
      </DropButton>
      <FormatSep />
      <Coords>
        <CoordField>x: <CoordInput disabled /></CoordField>
        <CoordField>y: <CoordInput disabled /></CoordField>
        <SizeCoords>
          <CoordField>w: <CoordInput disabled /></CoordField>
          <Icon w={15} h={12}>
            <path d="M5 1.500H1.500v9H5M10 1.500h3.500v9H10" stroke="#6b6b6b" strokeWidth="2.800" />
          </Icon>
          <CoordField>h: <CoordInput disabled /></CoordField>
        </SizeCoords>
      </Coords>
      <HideField><HideBox type="checkbox" disabled />隐藏</HideField>
    </FormatBar>
  );
};

/* ------------------------------------------------------------------ */
/* Library widgets                                                     */
/* ------------------------------------------------------------------ */

const B = c.iconBlue;
const up = (x: number, y: number, fill = c.grey) => <path d={`M${x - 3} ${y + 2}h6l-3-4z`} fill={fill} />;
const down = (x: number, y: number, fill = c.grey) => <path d={`M${x - 3} ${y - 2}h6l-3 4z`} fill={fill} />;

const W = ({ children }: { children: React.ReactNode }) => <Icon w={36} h={36}>{children}</Icon>;

const basicWidgets: [string, React.ReactNode][] = [
  ['垂直线', <W><path d="M17.500 4v28" stroke={c.grey} strokeWidth="1.500" /><path d="M14 0h7v7h-7zM14 29h7v7h-7z" fill={B} /></W>],
  ['热区', <W><path d="M0 0h36v14H0z" fill={B} /><path d="M11.500 5v26l5.500-6 4 10 5-2-4-9h9z" fill="#fff" stroke={c.grey} strokeWidth="1.300" /></W>],
  ['动态面板', (
    <W>
      <path d="M18 17l18 9-18 9-18-9z" fill={B} />
      <path d="M18 8l18 9-18 9-18-9z" fill={c.grey} stroke="#fff" strokeWidth=".6" />
      <path d="M18 0l18 8-18 9-18-9z" fill="#cfcfcf" stroke="#fff" strokeWidth=".6" />
    </W>
  )],
  ['内联框架', (
    <W>
      <path d="M.7.7h34v34H.7zM26.500 1v34M26.500 9.500h8M26.500 26h8" stroke={c.grey} strokeWidth="1.400" />
      {[4, 8, 12, 15.5, 19, 23, 27, 31].map((y) => <path key={y} d={`M5 ${y}h7M15 ${y}h7`} stroke="#bdbdbd" strokeWidth="1.100" />)}
      {up(30.5, 5.5, B)}
      {down(30.5, 30, B)}
    </W>
  )],
  ['中继器', (
    <W>
      <path d="M7 2h27v31.500H7zM7 10.500h27M7 18h27M7 26h27M16 2v31.500M25 2v31.500" stroke={c.grey} strokeWidth="1.300" />
      <g fontFamily="Liberation Sans" fontWeight="bold" fontSize="7" fill={B}>
        <text x="9" y="9">A</text><text x="18" y="9">B</text><text x="27" y="9">C</text>
        <text x="1" y="17">1</text><text x="1" y="25">2</text><text x="1" y="33">3</text>
      </g>
    </W>
  )],
];

const formWidgets: [string, React.ReactNode][] = [
  ['文本框', (
    <W>
      <path d="M.7 8.500h34v19H.7z" stroke={c.grey} strokeWidth="1.400" />
      <text x="3" y="23" fontFamily="DejaVu Sans" fontWeight="bold" fontSize="12" fill={B}>abc</text>
      <path d="M28 11h4M30 11v13M28 24h4" stroke={c.grey} strokeWidth="1.200" />
    </W>
  )],
  ['多行文本框', (
    <W>
      <path d="M.7 6.500h34v23H.7zM23.500 6.500v23M23.500 18h11" stroke={c.grey} strokeWidth="1.400" />
      <text x="2" y="14" fontFamily="DejaVu Sans" fontWeight="bold" fontSize="7" fill={B}>abcd</text>
      <path d="M4 18h16M4 22h16M4 26h16" stroke={B} strokeWidth="1.300" />
      {up(29, 12)}
      {down(29, 24)}
    </W>
  )],
  ['下拉列表框', (
    <W>
      <path d="M.7.7h34v34H.7zM1 12h34M23.500 1v34M23.500 23.500h11" stroke={c.grey} strokeWidth="1.400" />
      <path d="M24 1h11v10.500H24z" fill={B} />
      {down(29.5, 6.5, '#fff')}
      <path d="M5 18h14M5 22h14M5 26h14M5 30h14" stroke={c.grey} strokeWidth="1.200" />
      {up(29.5, 18)}
      {down(29.5, 29)}
    </W>
  )],
  ['列表框', (
    <W>
      <path d="M.7 6.500h34v23H.7zM23.500 6.500v23M23.500 18h11" stroke={c.grey} strokeWidth="1.400" />
      <path d="M4 11.500h16M4 15.500h16M4 19.500h16M4 23.500h16" stroke="#bdbdbd" strokeWidth="1.200" />
      {up(29, 12)}
      {down(29, 24)}
    </W>
  )],
  ['复选框', <W><path d="M.7.7h34v34H.7z" stroke={c.grey} strokeWidth="1.400" /><path d="M6 15l9 9L29 10" stroke={B} strokeWidth="3" /></W>],
  ['单选按钮', <W><circle cx="18" cy="18" r="17" stroke={c.grey} strokeWidth="1.400" /><circle cx="18" cy="18" r="7.500" fill={B} /></W>],
  ['提交按钮', (
    <W>
      <rect x=".7" y="9" width="34.600" height="18" rx="5" stroke={c.grey} strokeWidth="1.400" />
      <text x="3" y="21" fontFamily="Liberation Mono" fontWeight="bold" fontSize="8" fill={c.grey}>SUBMIT</text>
    </W>
  )],
];

const menuWidgets: [string, React.ReactNode][] = [
  ['树状菜单', (
    <W>
      <path d="M4.500 7v25H19M4.500 14H19M4.500 23H19" stroke={c.grey} strokeWidth="1.300" />
      <path d="M0 1h17v6H0zM19 11h17v6H19zM19 20h17v6H19zM19 29h17v6H19z" fill={B} />
    </W>
  )],
  ['表格', (
    <W>
      <path d="M.7 9h34v24H.7zM1 17.500h34M1 25.500h34M12 9v24M23.500 9v24" stroke={c.grey} strokeWidth="1.300" />
      <path d="M0 3h35v7H0z" fill={B} />
    </W>
  )],
  ['水平菜单', (
    <W>
      <path d="M12 3.700h23v6H12zM23.500 3.700v6" stroke="#cfcfcf" strokeWidth="1.300" />
      <path d="M0 3h12.500v8H0z" fill={c.grey} />
      <path d="M0 11h12.500v6H25v16H12.500v-6H0z" fill={B} />
    </W>
  )],
];

const WidgetSet = ({ items }: { items: [string, React.ReactNode][] }) => (
  <WidgetGrid>
    {items.map(([name, icon]) => <Widget key={name}>{icon}{name}</Widget>)}
  </WidgetGrid>
);

const Chevron = () => (
  <Icon w={11} h={7}><path d="M1 1l4.500 4.500L10 1" stroke="#666" strokeWidth="2.200" /></Icon>
);

/* ------------------------------------------------------------------ */
/* Rulers                                                              */
/* ------------------------------------------------------------------ */

const stops = [0, 154, 308, 462, 615, 769, 923, 1077, 1231, 1385];
const tickLength = (i: number) => (i === 0 ? 19 : i === 5 ? 11 : 5);
const ticks = Array.from({ length: 10 }, (_, i) => i);

const TopTicks = () => (
  <Icon w={125} h={18}>
    {ticks.map((i) => <path key={i} d={`M${i * 12.5 + 0.5} 18v-${tickLength(i)}`} stroke="#b4b4b4" />)}
  </Icon>
);

const SideTicks = () => (
  <Icon w={18} h={125}>
    {ticks.map((i) => <path key={i} d={`M18 ${i * 12.5 + 0.5}h-${tickLength(i)}`} stroke="#b4b4b4" />)}
  </Icon>
);

/* ------------------------------------------------------------------ */
/* Inspector                                                           */
/* ------------------------------------------------------------------ */

const InspectorView = () => {
  const [effect, setEffect] = useState('0');
  const effectId = useId();
  return (
    <Inspector>
      <InspectorBody>
        <StyleRow>
          <StyleName>Default*<Caret /></StyleName>
          <StyleLinks><a href="#update">更新</a><a href="#create">创建</a></StyleLinks>
          <button aria-label="样式管理"><StyleIcon /></button>
        </StyleRow>
        <PropRow $h={44}>
          <PropLabel>页面排列</PropLabel>
          <PropControls $end>
            <Segments>
              <Segment aria-label="靠左"><Lines rows={alignLeft} color="#666" /></Segment>
              <Segment $on $strong aria-label="居中"><Lines rows={alignMid} color="#666" /></Segment>
            </Segments>
          </PropControls>
        </PropRow>
        <PropRow $h={46}>
          <PropLabel>背景颜色</PropLabel>
          <PropControls $end>
            <DropButton aria-label="背景颜色">
              <Icon w={16} h={16}><path d="M1 1h14v14H1z" stroke="#808080" strokeWidth="1.300" fill="#fff" /></Icon>
              <Caret />
            </DropButton>
          </PropControls>
        </PropRow>
        <PropRow $h={134}>
          <PropLabel>背景图片</PropLabel>
          <PropControls>
            <ControlLine>
              <Preview />
              <PushButton>导入</PushButton>
              <PushButton disabled>清空</PushButton>
            </ControlLine>
            <ControlLine $between>
              <Segments>
                <Segment aria-label="水平靠左"><InsetIcon x={1} y={4.5} /></Segment>
                <Segment $on $strong aria-label="水平居中"><InsetIcon x={4.5} y={4.5} /></Segment>
                <Segment aria-label="水平靠右"><InsetIcon x={8} y={4.5} /></Segment>
              </Segments>
              <Segments>
                <Segment aria-label="垂直靠上"><InsetIcon x={4.5} y={1} /></Segment>
                <Segment $on $strong aria-label="垂直居中"><InsetIcon x={4.5} y={4.5} /></Segment>
                <Segment aria-label="垂直靠下"><InsetIcon x={4.5} y={8} /></Segment>
              </Segments>
            </ControlLine>
            <SelectBox>
              <NativeSelect aria-label="重复" $pad={9}><option>不重复</option></NativeSelect>
              <Caret />
            </SelectBox>
          </PropControls>
        </PropRow>
        <PropRow $h={114}>
          <PropLabel as="label" htmlFor={effectId}>草图/页面效果</PropLabel>
          <PropControls>
            <ControlLine>
              <EffectInput id={effectId} value={effect} onChange={(e) => setEffect(e.target.value)} />
              <SliderBox>
                <Slider
                  type="range"
                  min="0"
                  max="100"
                  aria-label="草图程度"
                  value={Number(effect) || 0}
                  onChange={(e) => setEffect(e.target.value)}
                />
                <Icon w={126} h={5}>
                  {Array.from({ length: 11 }, (_, i) => (
                    <path key={i} d={`M${6.5 + i * 11.3} 0v5`} stroke="#bdbdbd" />
                  ))}
                </Icon>
              </SliderBox>
            </ControlLine>
            <Segments>
              <Segment $on $strong aria-label="彩色"><PictureIcon land={B} sun="#5fe03a" /></Segment>
              <Segment aria-label="黑白"><PictureIcon land="#8a8a8a" sun="#8a8a8a" /></Segment>
            </Segments>
            <SelectBox>
              <NativeSelect aria-label="字体" $bg="#fff" $pad={3}><option>Applied Font</option></NativeSelect>
              <Caret />
            </SelectBox>
          </PropControls>
        </PropRow>
      </InspectorBody>
      <ScrollV before={1} size={313} after={33} />
    </Inspector>
  );
};

/* ------------------------------------------------------------------ */
/* App                                                                 */
/* ------------------------------------------------------------------ */

export default function App() {
  return (
    <>
      <GlobalStyle />
      <Window>
        <Title />
        <MenuBar>
          {menus.map(([name, key]) => (
            <MenuButton key={key}>{name}(<u>{key}</u>)</MenuButton>
          ))}
        </MenuBar>
        <ToolbarView />
        <FormatBarView />
        <Work>
          <LeftDock>
            <PanelHead>
              <DockArrow />
              <h2>页面</h2>
              <HeadIcons>
                <button aria-label="添加页面"><AddPageIcon /></button>
                <button aria-label="添加文件夹"><AddFolderIcon /></button>
                <button aria-label="搜索"><SearchIcon /></button>
              </HeadIcons>
            </PanelHead>
            <PageTree>
              <TreeRow $indent={8}>
                <Icon w={10} h={9}><path d="M0 9h10V0z" fill="#555" /></Icon>
                <PageIcon />
                index
              </TreeRow>
              <TreeRow $indent={52} $on><PageIcon />page1</TreeRow>
              <TreeRow $indent={52}><PageIcon />page2</TreeRow>
              <TreeRow $indent={52}><PageIcon />page3</TreeRow>
            </PageTree>
            <LibraryTop>
              <PanelHead>
                <DockArrow />
                <h2>元件库</h2>
                <HeadIcons>
                  <button aria-label="选项"><BurgerIcon /></button>
                  <button aria-label="搜索"><SearchIcon /></button>
                </HeadIcons>
              </PanelHead>
              <LibraryPick>
                <SelectBox>
                  <NativeSelect aria-label="元件库" $h={27} $size={14} $pad={4}><option>Default</option></NativeSelect>
                  <Caret color="#000" />
                </SelectBox>
              </LibraryPick>
            </LibraryTop>
            <Library>
              <LibraryScroll>
                <WidgetSet items={basicWidgets} />
                <LibraryHeading><Chevron />表单元件</LibraryHeading>
                <WidgetSet items={formWidgets} />
                <LibraryHeading><Chevron />菜单和表格</LibraryHeading>
                <WidgetSet items={menuWidgets} />
              </LibraryScroll>
              <ScrollV before={189} size={236} after={161} />
            </Library>
            <PanelHead $h={29}>
              <DockArrow />
              <h2>母版</h2>
              <HeadIcons>
                <button aria-label="添加母版"><AddPageIcon /></button>
                <button aria-label="添加文件夹"><AddFolderIcon /></button>
                <button aria-label="搜索"><SearchIcon /></button>
              </HeadIcons>
            </PanelHead>
          </LeftDock>

          <Centre>
            <TabStrip>
              <Tab $on>page1<button aria-label="关闭 page1"><CloseIcon /></button></Tab>
              <Tab>index<button aria-label="关闭 index"><CloseIcon /></button></Tab>
              <TabMenu aria-label="全部标签"><Caret w={11} h={6} /></TabMenu>
            </TabStrip>
            <RulerTop>
              {stops.map((n) => <TopMark key={n}><TopTicks /><span>{n}</span></TopMark>)}
            </RulerTop>
            <CentreBody>
              <RulerSide>
                {stops.slice(0, 7).map((n) => <SideMark key={n}><SideTicks /><span>{n}</span></SideMark>)}
              </RulerSide>
              <CanvasColumn>
                <CanvasRow>
                  <Canvas>
                    <Banner>
                      <BannerFrame>
                        <BannerMenu>
                          <BannerItem>bootstrap中文网</BannerItem>
                          <BannerItem>bootstrap3中文网</BannerItem>
                          <BannerItem>bootstrap4中文网</BannerItem>
                          <BannerItem />
                          <BannerItem>关于</BannerItem>
                        </BannerMenu>
                      </BannerFrame>
                    </Banner>
                  </Canvas>
                  <ScrollV before={0} size={40} after={755} />
                </CanvasRow>
                <ScrollRow>
                  <ScrollH before={0} size={82} after={1066} />
                  <ScrollCorner />
                </ScrollRow>
              </CanvasColumn>
            </CentreBody>
          </Centre>

          <RightDock>
            <PanelHead $rule $h={32}>
              <DockArrow />
              <h2>检视: 页面</h2>
              <span />
            </PanelHead>
            <InspectorTabs>
              <InspectorTab>属性</InspectorTab>
              <InspectorTab>说明</InspectorTab>
              <InspectorTab $on>样式</InspectorTab>
            </InspectorTabs>
            <InspectorView />
            <PanelHead>
              <DockArrow />
              <h2>概要: 页面</h2>
              <HeadIcons>
                <button aria-label="筛选"><FilterIcon /></button>
                <button aria-label="搜索"><SearchIcon /></button>
              </HeadIcons>
            </PanelHead>
            <OutlineList>
              <OutlineRow $indent={7} $on><PageIcon />page1</OutlineRow>
              <OutlineRow $indent={25} $gap={8}>
                <Icon w={20} h={21}>
                  <path d="M.7 4.500h18.600v15.700H.7z" stroke="#666" strokeWidth="1.300" />
                  <path d="M0 0h10v5H0z" fill="#555" />
                </Icon>
                (菜单)
              </OutlineRow>
              <OutlineRow $indent={25} $gap={8}>
                <Icon w={20} h={6}><path d="M.7 1h18.600v4H.7z" stroke="#666" strokeWidth="1.300" fill="#fff" /></Icon>
                导航填充 (矩形)
              </OutlineRow>
              <OutlineRow $indent={12} $gap={8}>
                <Icon w={7} h={11}><path d="M.7 0l5.800 5.500L.7 11z" stroke="#888" /></Icon>
                <Icon w={18} h={16}>
                  <path d="M3 8h13v7H3z" fill={c.blue} />
                  <path d="M1 6h15v5H1z" fill="#666" />
                  <path d="M0 1h14l1 5H1z" fill="#a5a5a5" />
                </Icon>
                (动态面板)
              </OutlineRow>
            </OutlineList>
            <PanelMark>
              <Icon w={20} h={68}>
                <path d="M3 54.500h13v12H3z" stroke="#777" strokeWidth="1.300" fill="#fff" />
                <path d="M6 58h7v6H6z" fill={c.blue} />
                <rect x="10.500" y="1.500" width="9" height="61" rx="4.500" fill="#fafafa" stroke="#777" strokeWidth="2" />
                <rect x="12.500" y="28" width="4.500" height="33" rx="2" fill="#f9762b" />
              </Icon>
            </PanelMark>
          </RightDock>
        </Work>
        <BottomEdge><BottomEdgeMark /></BottomEdge>
      </Window>
      <ImeBar>
        <span>中</span>
        <span>简</span>
        <span>软</span>
        <Icon w={25} h={24}>
          <path d="M4 1h17v9H4z" fill="#000" />
          <path d="M0 12h25v11H0z" fill="#555" />
        </Icon>
        <Icon w={24} h={24}>
          <path d="M4 4l4-4 15 14-4 4-5-4-9 9-4-3 8-10z" fill="#555" />
        </Icon>
      </ImeBar>
    </>
  );
}
